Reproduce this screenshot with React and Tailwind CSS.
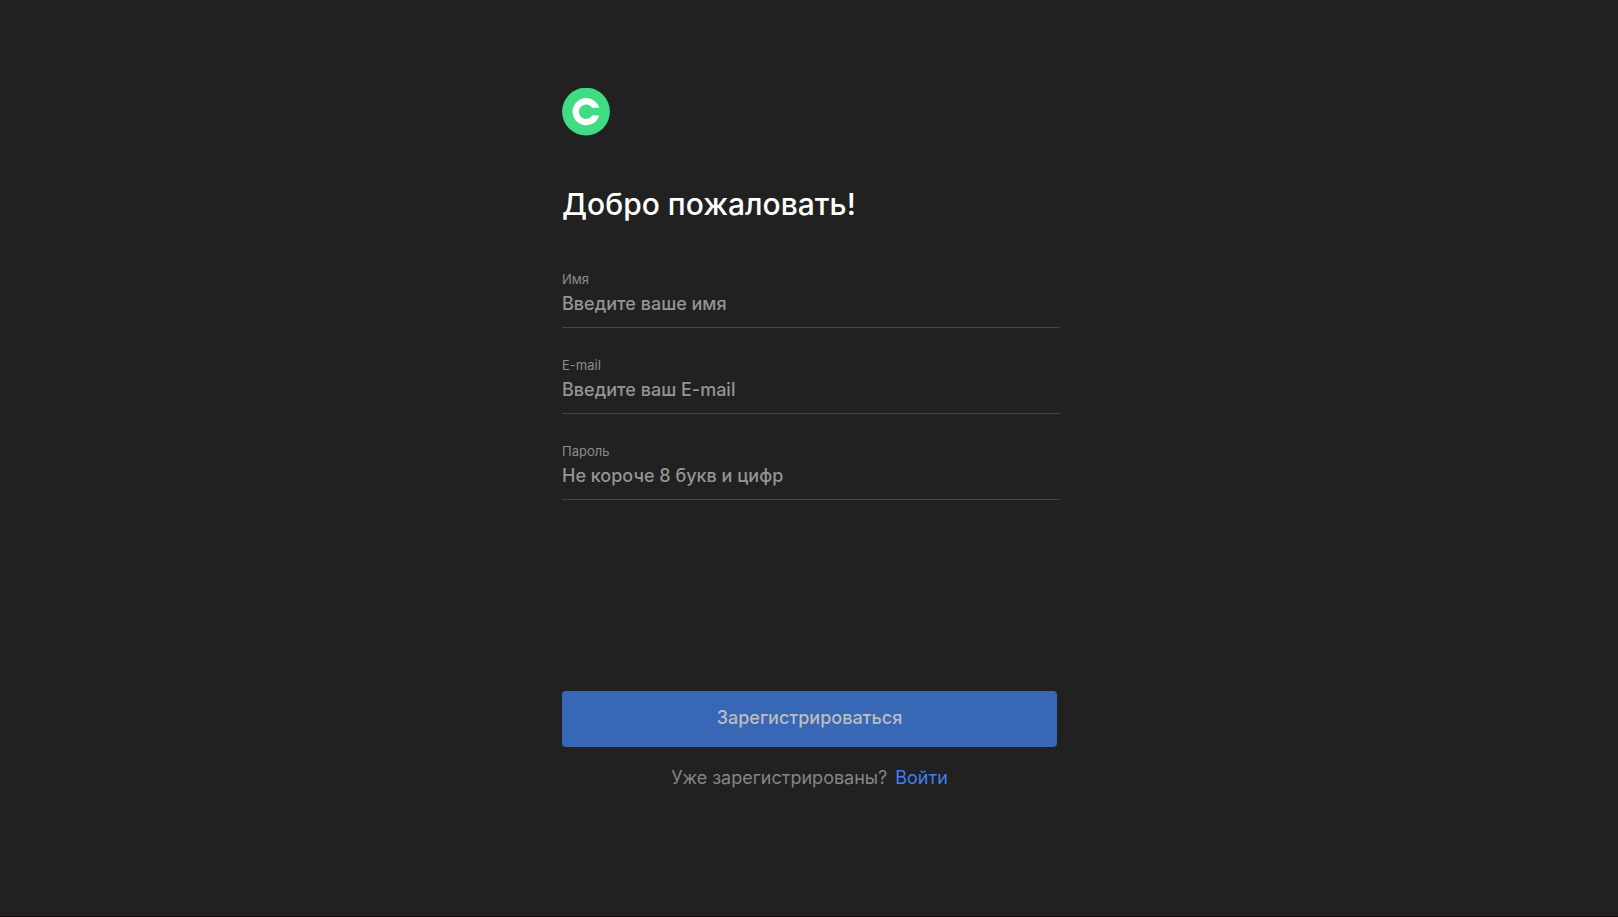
const fields = [
  { id: 'name', label: 'Имя', type: 'text', placeholder: 'Введите ваше имя' },
  { id: 'email', label: 'E-mail', type: 'email', placeholder: 'Введите ваш E-mail' },
  { id: 'password', label: 'Пароль', type: 'password', placeholder: 'Не короче 8 букв и цифр' },
];

function Logo() {
  return (
    <svg className="h-12 w-12" viewBox="0 0 48 48" aria-hidden="true">
      <circle cx="24" cy="23.6" r="23.9" fill="#40dc85" />
      <path
        d="M37.2 19.8A13.6 13.6 0 1 0 37.2 27.6H30.2A7.2 7.2 0 1 1 30.2 19.8Z"
        fill="#fff"
      />
    </svg>
  );
}

function Field({ id, label, type, placeholder }) {
  return (
    <div className="flex flex-col border-b border-[#444444] pb-[10px]">
      <label htmlFor={id} className="text-[13px] leading-5 text-[#8c8c8c]">
        {label}
      </label>
      <input
        id={id}
        type={type}
        placeholder={placeholder}
        className="h-7 w-full bg-transparent text-[18px] font-medium text-white outline-none placeholder:text-[#949494]"
      />
    </div>
  );
}

export default function App() {
  return (
    <main className="min-h-screen border-b border-[#120c0e] bg-[#212121] pt-[88px] pb-10 pl-1 font-['Inter','Liberation_Sans',sans-serif]">
      <div className="mx-auto w-full max-w-[498px]">
        <Logo />
        <h1 className="mt-12 text-[30px] font-medium leading-10 text-white">Добро пожаловать!</h1>
        <form className="mt-[45px]" onSubmit={(e) => e.preventDefault()}>
          <div className="flex flex-col gap-[27px]">
            {fields.map((f) => (
              <Field key={f.id} {...f} />
            ))}
          </div>
          <div className="mt-[191px] max-w-[495px]">
            <button
              type="submit"
              className="h-14 w-full rounded-[4px] bg-[#3868b5] pb-1 text-[18px] font-medium text-[#bdbdbd]"
            >
              Зарегистрироваться
            </button>
            <p className="mt-[17px] flex justify-center gap-2 text-[18px] leading-7 text-[#858585]">
              Уже зарегистрированы?
              <a href="#login" className="text-[#4080f0]">
                Войти
              </a>
            </p>
          </div>
        </form>
      </div>
    </main>
  );
}
